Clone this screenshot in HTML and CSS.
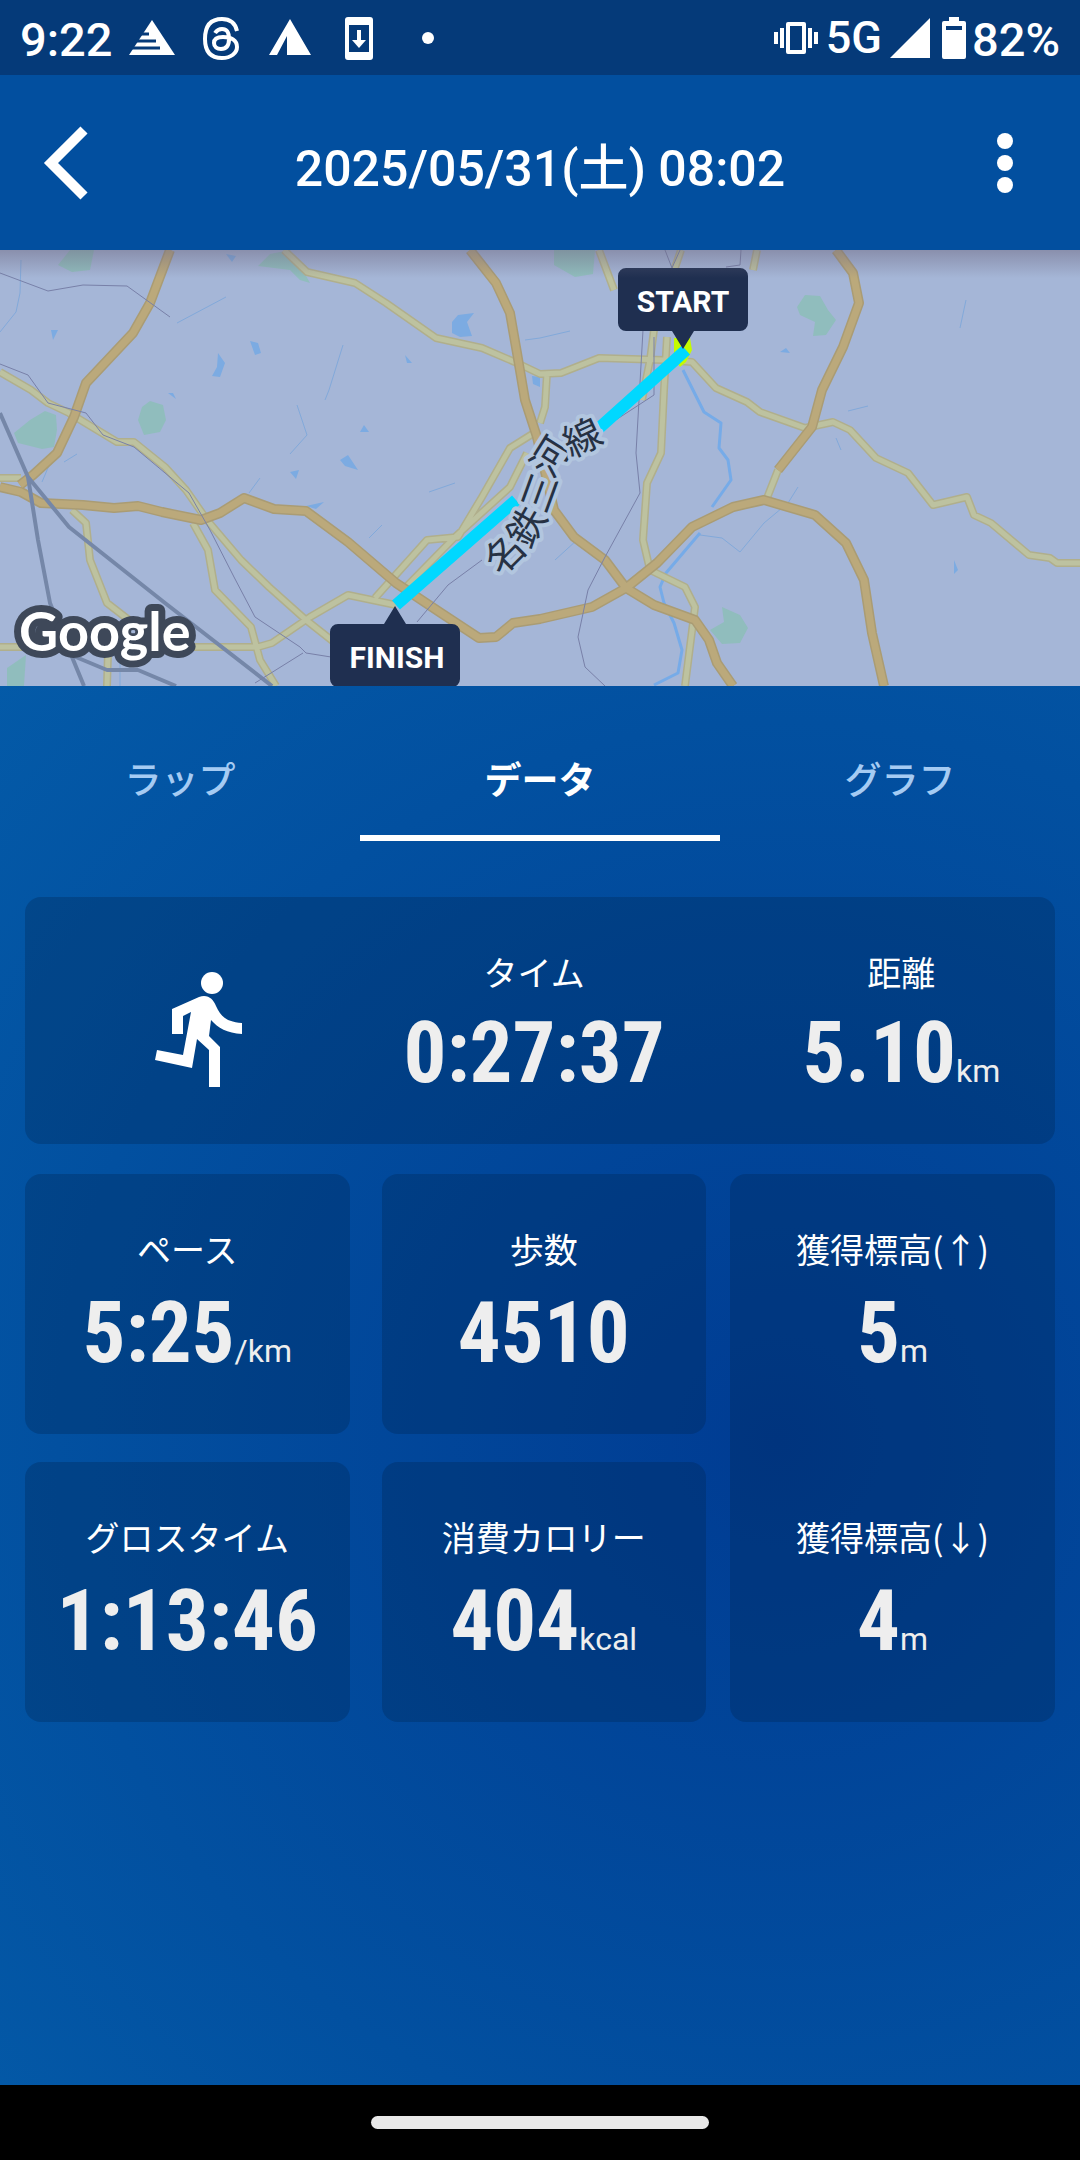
FILE: index.html
```html
<!DOCTYPE html>
<html lang="ja">
<head>
  <meta charset="UTF-8">
  <meta name="viewport" content="width=device-width, initial-scale=1">
  <title>2025/05/31(土) 08:02</title>
  <link rel="stylesheet" href="styles.css">
</head>
<body>
<div class="status">
  <span class="clock">9:22</span>
  <div class="notices">
    <svg viewBox="0 0 48 48"><path d="M24 6 47 41H1Z"/><path class="gap" d="M10 20H21M6 27H28M2 34H32"/></svg>
    <svg viewBox="0 0 48 48" class="line"><path d="M40 17C38 8 32 5 25 5 13 5 8 13 8 25s5 19 17 19c9 0 15-5 15-11 0-7-6-10-14-10-6 0-9 2-9 6s3 6 7 6c6 0 8-4 8-10 0-7-2-10-7-10-3 0-5 1-7 4"/></svg>
    <svg viewBox="0 0 48 48"><path d="M24 5 45 41H21V22L11 41H3Z"/></svg>
    <svg viewBox="0 0 48 48"><path fill-rule="evenodd" d="M13 3H35a3 3 0 0 1 3 3V43a3 3 0 0 1-3 3H13a3 3 0 0 1-3-3V6a3 3 0 0 1 3-3ZM14 11V38H34V11ZM22 16h4V26h5L24 34 17 26h5Z"/></svg>
    <svg viewBox="0 0 48 48"><circle cx="24" cy="24" r="6"/></svg>
  </div>
  <div class="signals">
    <svg viewBox="0 0 44 44" class="vibrate"><path fill-rule="evenodd" d="M14 6H30a2 2 0 0 1 2 2V36a2 2 0 0 1-2 2H14a2 2 0 0 1-2-2V8a2 2 0 0 1 2-2ZM16 10V34H28V10ZM6 12h4V32H6ZM0 16H4V28H0ZM34 12h4V32H34ZM40 16h4V28H40Z"/></svg>
    <span class="network">5G</span>
    <svg viewBox="0 0 40 40" class="bars"><path d="M40 0V40H0Z"/></svg>
    <svg viewBox="0 0 24 42" class="battery"><path fill-rule="evenodd" d="M7 0H17V4H22a2 2 0 0 1 2 2V40a2 2 0 0 1-2 2H2a2 2 0 0 1-2-2V6A2 2 0 0 1 2 4H7ZM4 9V13H20V9Z"/></svg>
    <span class="percent">82%</span>
  </div>
</div>

<header class="topbar">
  <button class="icon-btn" aria-label="戻る">
    <svg viewBox="0 0 80 80"><path d="M56 7 23 40 56 73" class="chevron"/></svg>
  </button>
  <h1>2025/05/31(土) 08:02</h1>
  <button class="icon-btn" aria-label="メニュー">
    <svg viewBox="0 0 80 80"><circle cx="33" cy="18" r="8"/><circle cx="33" cy="40" r="8"/><circle cx="33" cy="62" r="8"/></svg>
  </button>
</header>

<div class="map">
  <svg viewBox="0 0 1080 436" preserveAspectRatio="xMidYMid slice" role="img" aria-label="ルート">
    <g class="park">
      <path d="M14 183 30 170 45 161 56 165 57 180 54 197 42 199 18 193Z"/>
      <path d="M138 170 142 157 150 151 163 155 166 170 160 182 144 185Z"/>
      <path d="M58 15 70 0H94L90 20 72 22Z"/>
      <path d="M258 16 270 4 290 0 300 15 310 33 300 30 290 20Z"/>
      <path d="M554 0H595L593 24 575 27 554 15Z"/>
      <path d="M797 57 805 45 820 46 828 60 836 70 826 85 813 86 815 72 800 65Z"/>
      <path d="M722 357 740 365 748 378 740 393 722 394 710 380 724 372Z"/>
      <path d="M7 418 26 405 24 436H7Z"/>
    </g>
    <g class="lake">
      <path d="M452 72 458 65 474 63 467 72 472 86 460 87 452 83Z"/>
      <path d="M218 103 225 113 220 127 212 126 217 117Z"/>
      <path d="M250 91 258 93 261 103 255 105Z"/>
      <path d="M51 80 58 80 53 90Z"/>
      <path d="M168 143 173 143 176 149Z"/>
      <path d="M405 105 412 113 407 113Z"/>
      <path d="M360 182 364 175 369 182Z"/>
      <path d="M340 210 348 205 358 220 345 216Z"/>
      <path d="M290 222 299 220 296 229Z"/>
      <path d="M306 256 324 252 316 259Z"/>
      <path d="M226 4 236 6 232 12Z"/>
      <path d="M532 126 540 127V137L533 134Z"/>
      <path d="M780 102 786 98 790 103Z"/>
      <path d="M954 310 958 320 954 324Z"/>
    </g>
    <g class="stream">
      <path d="M21 10 20 43 16 62 0 82M177 73 226 47M343 95 329 140 325 150M297 155 307 185 290 204M429 242 455 233M369 288 382 275M249 243 260 228M42 232 50 213M64 212 77 204M120 397V436M848 161 868 156M966 50 960 78M836 188 841 200M540 88 570 81M555 310 577 290M525 90 540 88"/>
      <path class="river" d="M683 120 704 162 721 173 719 198 728 210 731 230 712 257M700 283 666 323 660 337 664 353 674 373 682 400 678 423 654 435"/>
      <path d="M700 285 722 288 740 302 764 273 788 253 798 237"/>
    </g>
    <!-- each road is a darker casing with a lighter line on it -->
    <g class="yellow-case">
      <path id="yellow" d="M284 0 307 22 355 33 386 53 436 88 482 98 517 113 540 124 561 123 599 108 664 110 692 112 716 138 747 152 760 162 805 178 833 172 850 180 876 208 908 223 933 255 967 247 974 265 991 273 1029 305 1050 308 1057 313H1080M0 122 31 140 48 153 69 163 117 192 134 192 165 217 186 240 207 270 241 310 269 337 306 370 344 400M0 228H21M72 260 86 273 90 310 107 353 138 377M193 273 208 300 215 340 251 377 260 410 276 436M0 397H258L272 393 310 367 348 345 396 355M375 348 427 290 458 287 482 247 510 198 534 183M406 337 455 287 510 237 527 203M667 87 664 140 661 203 647 233 643 290 650 320 685 337 695 357 685 436M681 0 654 80 650 110 642 150M599 0 614 40M757 0 753 20M547 123 545 157 540 173M108 403 107 436M778 220 767 248"/>
    </g>
    <use href="#yellow" class="yellow-line"/>
    <g class="orange-case">
      <path id="orange" d="M170 0 150 53 133 83 86 133 74 167 57 203 33 225 20 235M0 237 21 242 41 253 83 255 114 258 138 256 162 262 201 270 220 263 244 248 274 259 306 261 348 292 396 333 441 363 479 388 496 387 513 373 540 369 592 357 626 338 657 313 692 277 733 257 764 250 815 265 846 293 864 330 872 383 884 436M470 0 496 33 510 63 517 103 525 150 537 187 554 260 574 287 605 310 626 338 654 355 695 370 709 390 717 413 733 436M836 0 853 23 859 53 843 97 822 140 812 177 778 220"/>
    </g>
    <use href="#orange" class="orange-line"/>
    <g class="rail">
      <path d="M0 163 28 227 69 277 165 353 272 436M28 227 38 290 50 353 72 407 84 436M71 405 107 420H138L176 436"/>
      <path class="thin" d="M0 23 48 41 83 35 127 36 170 67M0 114 28 125 48 153 86 163 103 185 134 197 189 243 210 280 234 327 255 367 300 397 306 403 331 407M255 433 303 403M417 372 448 335 482 310M643 80 636 203 640 243 605 307 588 340 578 387 585 417 605 436M654 87V145L605 177M741 0 740 15 726 17M665 0 672 18 680 0"/>
    </g>
    <path class="spot" d="M674 88H690L692 100 686 112 680 117 674 108Z"/>
    <path class="route" d="M396 355 516 250M598 179 686 100"/>
    <text class="place" x="501 529 546 552 571" y="327 300 265 230 208" rotate="-45 -60 -70 -58 -25">名鉄三河線</text>
    <text x="19" y="401" class="google">Google</text>
    <g class="pin">
      <path d="M626 18H740a8 8 0 0 1 8 8V73a8 8 0 0 1-8 8H694L683 99 672 81H626a8 8 0 0 1-8-8V26a8 8 0 0 1 8-8Z"/>
      <text x="683" y="62">START</text>
      <path d="M338 374H384L395 356 406 374H452a8 8 0 0 1 8 8V429a8 8 0 0 1-8 8H338a8 8 0 0 1-8-8V382a8 8 0 0 1 8-8Z"/>
      <text x="397" y="418">FINISH</text>
    </g>
  </svg>
</div>

<main>
  <nav class="tabs">
    <a href="#lap">ラップ</a>
    <a href="#data" class="active">データ</a>
    <a href="#graph">グラフ</a>
  </nav>

  <section class="card summary">
    <svg class="runner" viewBox="0 0 88 116"><circle cx="57" cy="12" r="11"/><path d="M17 38 44 26C53 23 58 28 61 35 66 46 72 51 87 52V63C72 62 63 57 56 49L54 65 65 76V116H54V79L42 68 37 97 0 89 2 79 28 84 36 41 28 45V63H17Z"/></svg>
    <div class="stat">
      <h2>タイム</h2>
      <p>0:27:37</p>
    </div>
    <div class="stat">
      <h2>距離</h2>
      <p>5.10<small>km</small></p>
    </div>
  </section>

  <div class="details">
    <div class="cells">
      <section class="card stat">
        <h2>ペース</h2>
        <p>5:25<small>/km</small></p>
      </section>
      <section class="card stat">
        <h2>歩数</h2>
        <p>4510</p>
      </section>
      <section class="card stat">
        <h2>グロスタイム</h2>
        <p>1:13:46</p>
      </section>
      <section class="card stat">
        <h2>消費カロリー</h2>
        <p>404<small>kcal</small></p>
      </section>
    </div>
    <section class="card elevation">
      <div class="stat">
        <h2>獲得標高(↑)</h2>
        <p>5<small>m</small></p>
      </div>
      <div class="stat">
        <h2>獲得標高(↓)</h2>
        <p>4<small>m</small></p>
      </div>
    </section>
  </div>
</main>

<footer class="gesture"><span></span></footer>
</body>
</html>
```
FILE: styles.css
```css
* { box-sizing: border-box; }
body { margin: 0; min-height: 100vh; display: flex; flex-direction: column; background: #000; color: #fff; font-family: Roboto, "Noto Sans CJK JP", sans-serif; }
h1, h2, p { margin: 0; font-weight: 400; }
svg { display: block; fill: #fff; }

/* status bar */
.status { display: flex; align-items: center; height: 75px; padding: 0 20px; background: #053a79; font-size: 47px; font-weight: 500; line-height: 75px; }
.clock { width: 108px; padding-top: 4px; }
.notices { display: flex; gap: 21px; }
.notices svg { width: 48px; height: 48px; }
.notices .line { fill: none; stroke: #fff; stroke-width: 4; }
.notices .gap { stroke: #053a79; stroke-width: 3; }
.signals { display: flex; align-items: center; margin-left: auto; }
.vibrate { width: 44px; height: 44px; }
.network { margin: 0 8px; font-size: 45px; }
.bars { width: 40px; height: 40px; }
.battery { width: 24px; height: 42px; margin: 0 6px 0 12px; }
.percent { padding-top: 4px; }

/* title bar */
.topbar { display: flex; align-items: center; justify-content: space-between; height: 175px; padding: 0 28px; background: #024f9f; }
.topbar h1 { padding-top: 12px; font-size: 50px; font-weight: 500; line-height: 60px; }
.icon-btn { width: 80px; height: 80px; padding: 0; border: 0; background: none; }
.chevron { fill: none; stroke: #fff; stroke-width: 10; }

/* map */
.map { position: relative; height: 436px; overflow: hidden; background: #a5b6d7; }
.map::after { content: ""; position: absolute; top: 0; left: 0; right: 0; height: 28px; background: linear-gradient(rgba(110, 105, 130, 0.5), rgba(110, 105, 130, 0)); }
.map svg { width: 100%; height: 100%; fill: none; stroke-linejoin: round; }
.park { fill: #90bdbd; }
.lake { fill: #7cabe2; }
.stream { stroke: #82a9da; stroke-width: 1; }
.river { stroke: #76abe8; stroke-width: 3; }
.yellow-case { stroke: #b0af8c; stroke-width: 8; }
.yellow-line { stroke: #bdc2a0; stroke-width: 5; }
.orange-case { stroke: #aa9c74; stroke-width: 10; }
.orange-line { stroke: #bba97b; stroke-width: 7; }
.rail { stroke: #7587a8; stroke-width: 4; }
.thin { stroke: #7880a8; stroke-width: 1; }
.spot { fill: #c4fb00; }
.route { stroke: #00d8ff; stroke-width: 12; }
.place { fill: #263143; stroke: #b2c6df; stroke-width: 8; paint-order: stroke; font-family: "Noto Sans CJK JP", sans-serif; font-size: 38px; }
.google { fill: #fff; stroke: #3e4859; stroke-width: 14; paint-order: stroke; font-family: Lato, sans-serif; font-size: 54px; font-weight: 700; }
.pin { fill: #1f2f50; }
.pin text { fill: #fff; font-size: 30px; font-weight: 700; text-anchor: middle; }

/* content */
main { flex: 1; padding: 0 25px 25px; background: radial-gradient(circle at 72% 54%, #003c93 0, #0250a0 720px, #045ca9 1150px); }
.tabs { display: flex; margin: 0 -25px 56px; }
.tabs a { flex: 1; height: 155px; padding-top: 66px; border-bottom: 6px solid transparent; color: #a5cbf3; font-size: 37px; font-weight: 500; line-height: 60px; text-align: center; text-decoration: none; }
.tabs .active { color: #fff; border-color: #fff; font-weight: 700; }

.card { border-radius: 16px; background: rgba(0, 35, 80, 0.3); }
.summary { display: grid; grid-template-columns: 243fr 428fr 308fr; height: 247px; margin-bottom: 30px; padding-left: 53px; }
.runner { width: 88px; height: 116px; margin-top: 74px; justify-self: center; }
.stat { height: 260px; padding-top: 50px; text-align: center; }
.stat h2 { font-family: "Noto Sans CJK JP", sans-serif; font-size: 34px; line-height: 50px; }
.stat p { color: #eee; font-family: "Roboto Condensed", "Liberation Sans Narrow", sans-serif; font-size: 85px; font-weight: 700; line-height: 118px; white-space: nowrap; }
.summary p { line-height: 112px; }
.stat small { font-family: Roboto, sans-serif; font-size: 32px; font-weight: 400; }

.details { display: flex; gap: 24px; }
.cells { flex: 681; display: grid; grid-template-columns: 1fr 1fr; gap: 28px 32px; }
.elevation { flex: 325; display: flex; flex-direction: column; gap: 28px; }

/* gesture bar */
.gesture { display: flex; justify-content: center; align-items: center; height: 75px; }
.gesture span { width: 338px; height: 13px; border-radius: 7px; background: #e9e9e9; }
```
